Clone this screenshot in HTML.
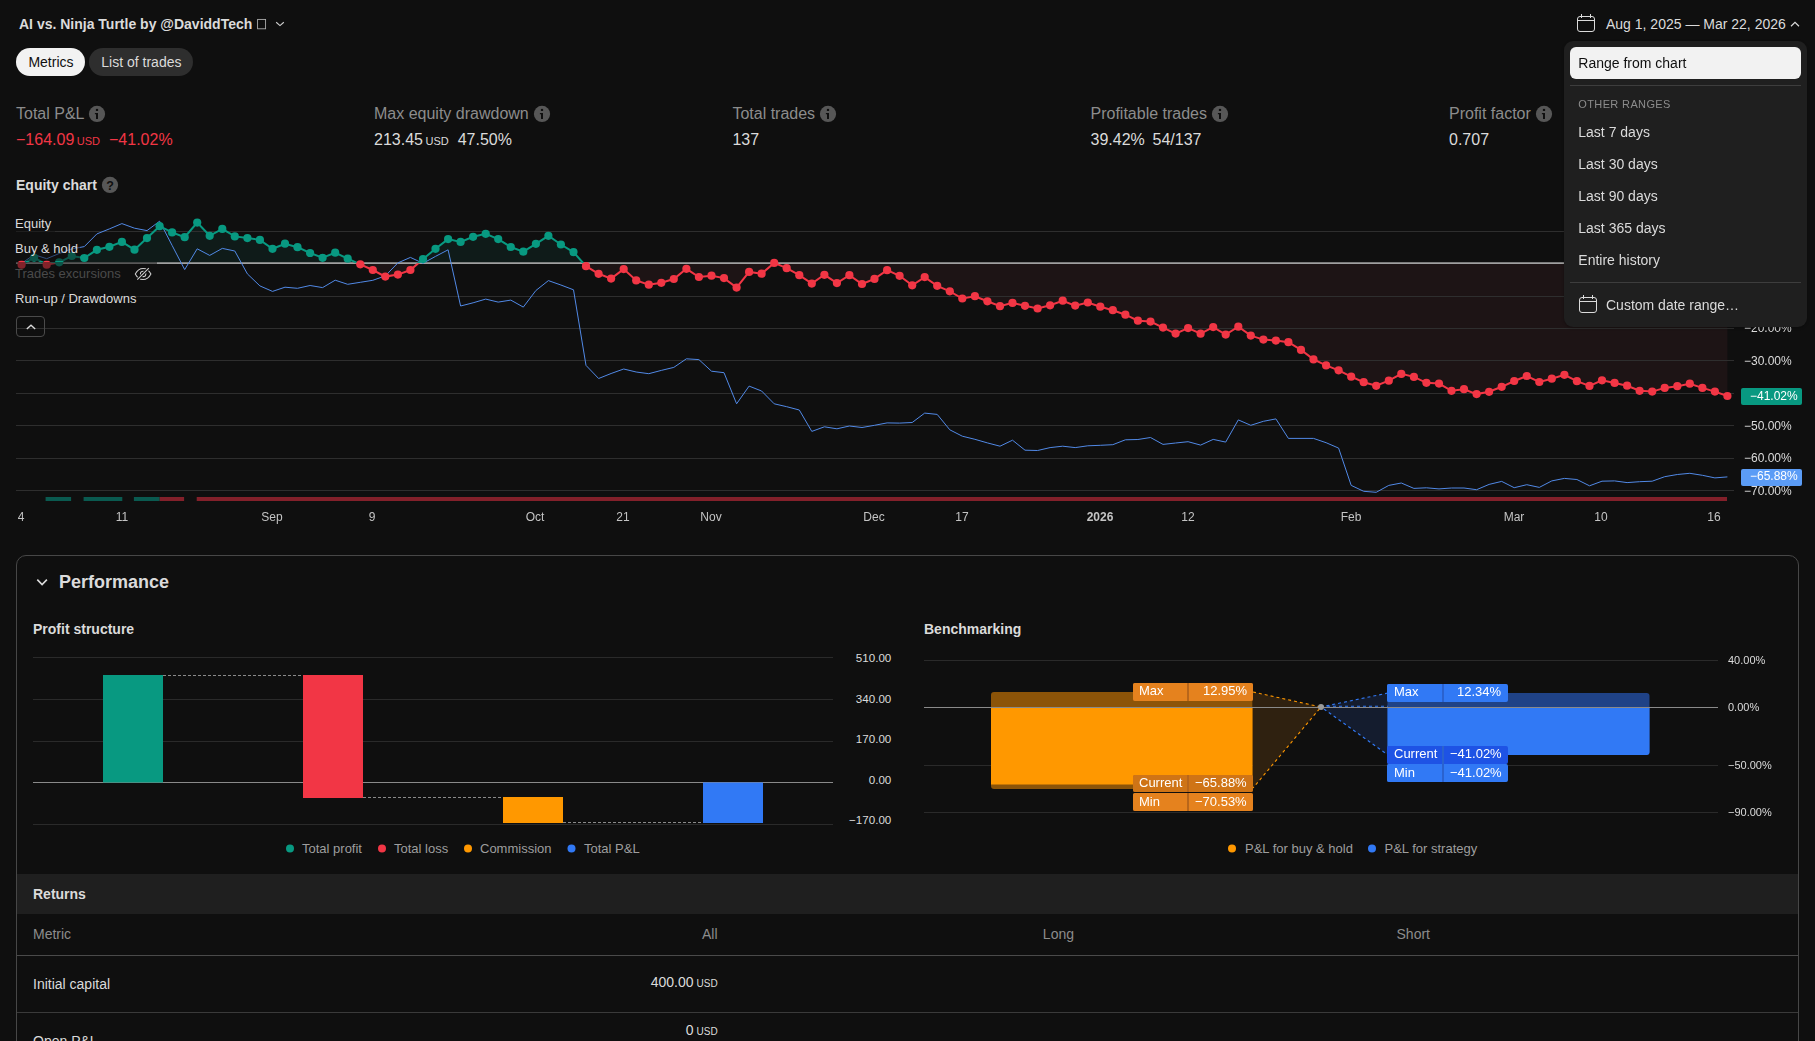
<!DOCTYPE html>
<html><head><meta charset="utf-8"><title>Strategy report</title>
<style>
html,body{margin:0;padding:0;background:#0f0f0f;}
body{width:1815px;height:1041px;overflow:hidden;position:relative;font-family:"Liberation Sans",sans-serif;}
.a{position:absolute;}
.t{position:absolute;white-space:nowrap;}
.u{font-size:11px;margin-left:2.5px;}
.u2{font-size:10px;margin-left:3px;}
</style></head><body>
<div class="t" style="left:19px;top:14.00px;font-size:14px;line-height:20px;color:#dbdbdb;font-weight:700;">AI vs. Ninja Turtle by @DaviddTech</div>
<svg class="a" style="left:255px;top:17px" width="14" height="14" viewBox="255 17 14 14"><rect x="257.6" y="19.4" width="8" height="9.4" fill="none" stroke="#b4b4b4" stroke-width="0.850"/></svg>
<svg class="a" style="left:274px;top:19px" width="12" height="10" viewBox="0 0 12 10"><path d="M2.2 3.3l3.8 3.3 3.8-3.3" fill="none" stroke="#d0d0d0" stroke-width="1.150"/></svg>
<div class="a" style="left:16px;top:48px;width:69px;height:28px;border-radius:14px;background:#f2f2f2"></div>
<div class="t" style="left:28.4px;top:52.00px;font-size:14px;line-height:20px;color:#0f0f0f;font-weight:400;">Metrics</div>
<div class="a" style="left:89.3px;top:48px;width:103.5px;height:28px;border-radius:14px;background:#2e2e2e"></div>
<div class="t" style="left:101.3px;top:52.00px;font-size:14px;line-height:20px;color:#dbdbdb;font-weight:400;">List of trades</div>
<svg class="a" style="left:1576px;top:13px" width="20" height="20" viewBox="0 0 20 20" fill="none" stroke="#dbdbdb" stroke-width="1"><rect x="1.5" y="3.5" width="17" height="15" rx="2.5"/><path d="M1.5 7.5h17M5.5 1v4M14.5 1v4"/></svg>
<div class="t" style="left:1606px;top:14.00px;font-size:14px;line-height:20px;color:#dbdbdb;font-weight:400;">Aug 1, 2025 — Mar 22, 2026</div>
<svg class="a" style="left:1789px;top:19px" width="12" height="10" viewBox="0 0 12 10"><path d="M2 7.2l4-3.8 4 3.8" fill="none" stroke="#dbdbdb" stroke-width="1.2"/></svg>
<div class="t" style="left:16px;top:102.50px;font-size:16px;line-height:22px;color:#8c8c8c;font-weight:400;">Total P&amp;L</div>
<svg class="a" style="left:88px;top:105px" width="18" height="18" viewBox="-9 -9 18 18"><circle cx="0" cy="-0.1" r="8.1" fill="#575757"/><rect x="-1.1" y="-5.1" width="2.2" height="2.1" fill="#0f0f0f"/><path d="M-2.1 -0.9H1V5H-1V0.3H-2.1Z" fill="#0f0f0f"/></svg>
<div class="t" style="left:374px;top:102.50px;font-size:16px;line-height:22px;color:#8c8c8c;font-weight:400;">Max equity drawdown</div>
<svg class="a" style="left:533px;top:105px" width="18" height="18" viewBox="-9 -9 18 18"><circle cx="0" cy="-0.1" r="8.1" fill="#575757"/><rect x="-1.1" y="-5.1" width="2.2" height="2.1" fill="#0f0f0f"/><path d="M-2.1 -0.9H1V5H-1V0.3H-2.1Z" fill="#0f0f0f"/></svg>
<div class="t" style="left:732.4px;top:102.50px;font-size:16px;line-height:22px;color:#8c8c8c;font-weight:400;">Total trades</div>
<svg class="a" style="left:819px;top:105px" width="18" height="18" viewBox="-9 -9 18 18"><circle cx="0" cy="-0.1" r="8.1" fill="#575757"/><rect x="-1.1" y="-5.1" width="2.2" height="2.1" fill="#0f0f0f"/><path d="M-2.1 -0.9H1V5H-1V0.3H-2.1Z" fill="#0f0f0f"/></svg>
<div class="t" style="left:1090.5px;top:102.50px;font-size:16px;line-height:22px;color:#8c8c8c;font-weight:400;">Profitable trades</div>
<svg class="a" style="left:1211px;top:105px" width="18" height="18" viewBox="-9 -9 18 18"><circle cx="0" cy="-0.1" r="8.1" fill="#575757"/><rect x="-1.1" y="-5.1" width="2.2" height="2.1" fill="#0f0f0f"/><path d="M-2.1 -0.9H1V5H-1V0.3H-2.1Z" fill="#0f0f0f"/></svg>
<div class="t" style="left:1449px;top:102.50px;font-size:16px;line-height:22px;color:#8c8c8c;font-weight:400;">Profit factor</div>
<svg class="a" style="left:1535px;top:105px" width="18" height="18" viewBox="-9 -9 18 18"><circle cx="0" cy="-0.1" r="8.1" fill="#575757"/><rect x="-1.1" y="-5.1" width="2.2" height="2.1" fill="#0f0f0f"/><path d="M-2.1 -0.9H1V5H-1V0.3H-2.1Z" fill="#0f0f0f"/></svg>
<div class="t" style="left:16px;top:128.50px;font-size:16px;line-height:22px;color:#f23645;font-weight:400;">−164.09<span class="u">USD</span><span style="margin-left:9px">−41.02%</span></div>
<div class="t" style="left:374px;top:128.50px;font-size:16px;line-height:22px;color:#dbdbdb;font-weight:400;">213.45<span class="u">USD</span><span style="margin-left:9px">47.50%</span></div>
<div class="t" style="left:732.4px;top:128.50px;font-size:16px;line-height:22px;color:#dbdbdb;font-weight:400;">137</div>
<div class="t" style="left:1090.5px;top:128.50px;font-size:16px;line-height:22px;color:#dbdbdb;font-weight:400;">39.42%<span style="margin-left:7.8px">54/137</span></div>
<div class="t" style="left:1449px;top:128.50px;font-size:16px;line-height:22px;color:#dbdbdb;font-weight:400;">0.707</div>
<div class="t" style="left:16px;top:175.00px;font-size:14px;line-height:20px;color:#dbdbdb;font-weight:700;">Equity chart</div>
<svg class="a" style="left:101px;top:175.5px" width="18" height="18" viewBox="-9 -9 18 18"><circle cx="0" cy="-0.1" r="8.1" fill="#575757"/><text x="0.1" y="4.9" text-anchor="middle" font-family="Liberation Sans, sans-serif" font-size="12.5" font-weight="700" fill="#0f0f0f">?</text></svg>
<svg class="a" style="left:0;top:0" width="1815" height="540" viewBox="0 0 1815 540"><defs><clipPath id="up"><rect x="0" y="0" width="1815" height="263.3"/></clipPath><clipPath id="dn"><rect x="0" y="263.3" width="1815" height="300"/></clipPath></defs><path d="M21.6,263.3 L21.6,264.7 L34.1,257.6 L46.7,264.7 L59.2,262.3 L71.8,256.0 L84.3,258.0 L96.9,249.8 L109.4,246.8 L121.9,241.9 L134.5,249.7 L147.0,238.1 L159.6,226.2 L172.1,232.4 L184.7,237.2 L197.2,222.6 L209.7,235.8 L222.3,228.9 L234.8,236.4 L247.4,238.1 L259.9,239.9 L272.5,248.8 L285.0,243.7 L297.5,247.2 L310.1,253.0 L322.6,257.8 L335.2,252.7 L347.7,258.7 L360.3,264.3 L372.8,270.0 L385.3,276.6 L397.9,274.6 L410.4,270.0 L423.0,259.1 L435.5,248.8 L448.1,239.1 L460.6,241.9 L473.1,236.8 L485.7,233.8 L498.2,239.1 L510.8,247.0 L523.3,251.7 L535.9,243.8 L548.4,235.8 L560.9,244.5 L573.5,252.1 L586.0,266.2 L598.6,273.8 L611.1,278.6 L623.7,269.1 L636.2,280.4 L648.8,284.7 L661.3,282.8 L673.8,279.0 L686.4,268.8 L698.9,277.0 L711.5,275.7 L724.0,278.1 L736.6,287.6 L749.1,271.9 L761.6,273.7 L774.2,262.9 L786.7,268.2 L799.3,275.2 L811.8,283.6 L824.4,274.8 L836.9,283.1 L849.4,275.2 L862.0,284.0 L874.5,278.9 L887.1,270.2 L899.6,275.8 L912.2,285.3 L924.7,277.1 L937.2,285.8 L949.8,291.3 L962.3,298.5 L974.9,296.2 L987.4,301.3 L1000.0,306.2 L1012.5,302.9 L1025.0,305.8 L1037.6,308.5 L1050.1,305.3 L1062.7,300.7 L1075.2,305.6 L1087.8,302.5 L1100.3,306.7 L1112.8,310.2 L1125.4,314.7 L1137.9,320.7 L1150.5,321.6 L1163.0,327.6 L1175.6,333.6 L1188.1,328.1 L1200.6,333.7 L1213.2,327.1 L1225.7,334.6 L1238.3,326.7 L1250.8,335.6 L1263.4,339.6 L1275.9,340.6 L1288.4,342.2 L1301.0,349.9 L1313.5,359.4 L1326.1,365.4 L1338.6,370.3 L1351.2,376.7 L1363.7,382.2 L1376.2,385.8 L1388.8,380.7 L1401.3,373.9 L1413.9,376.9 L1426.4,382.8 L1439.0,383.6 L1451.5,390.8 L1464.0,389.2 L1476.6,394.1 L1489.1,391.8 L1501.7,386.8 L1514.2,381.0 L1526.8,376.0 L1539.3,382.0 L1551.8,378.7 L1564.4,374.8 L1576.9,381.2 L1589.5,385.9 L1602.0,380.3 L1614.6,382.9 L1627.1,385.7 L1639.6,390.8 L1652.2,391.6 L1664.7,387.9 L1677.3,386.2 L1689.8,383.7 L1702.4,387.9 L1714.9,391.6 L1727.4,396.0 L1727.4,263.3 Z" fill="#0f1b19" clip-path="url(#up)"/><path d="M21.6,263.3 L21.6,264.7 L34.1,257.6 L46.7,264.7 L59.2,262.3 L71.8,256.0 L84.3,258.0 L96.9,249.8 L109.4,246.8 L121.9,241.9 L134.5,249.7 L147.0,238.1 L159.6,226.2 L172.1,232.4 L184.7,237.2 L197.2,222.6 L209.7,235.8 L222.3,228.9 L234.8,236.4 L247.4,238.1 L259.9,239.9 L272.5,248.8 L285.0,243.7 L297.5,247.2 L310.1,253.0 L322.6,257.8 L335.2,252.7 L347.7,258.7 L360.3,264.3 L372.8,270.0 L385.3,276.6 L397.9,274.6 L410.4,270.0 L423.0,259.1 L435.5,248.8 L448.1,239.1 L460.6,241.9 L473.1,236.8 L485.7,233.8 L498.2,239.1 L510.8,247.0 L523.3,251.7 L535.9,243.8 L548.4,235.8 L560.9,244.5 L573.5,252.1 L586.0,266.2 L598.6,273.8 L611.1,278.6 L623.7,269.1 L636.2,280.4 L648.8,284.7 L661.3,282.8 L673.8,279.0 L686.4,268.8 L698.9,277.0 L711.5,275.7 L724.0,278.1 L736.6,287.6 L749.1,271.9 L761.6,273.7 L774.2,262.9 L786.7,268.2 L799.3,275.2 L811.8,283.6 L824.4,274.8 L836.9,283.1 L849.4,275.2 L862.0,284.0 L874.5,278.9 L887.1,270.2 L899.6,275.8 L912.2,285.3 L924.7,277.1 L937.2,285.8 L949.8,291.3 L962.3,298.5 L974.9,296.2 L987.4,301.3 L1000.0,306.2 L1012.5,302.9 L1025.0,305.8 L1037.6,308.5 L1050.1,305.3 L1062.7,300.7 L1075.2,305.6 L1087.8,302.5 L1100.3,306.7 L1112.8,310.2 L1125.4,314.7 L1137.9,320.7 L1150.5,321.6 L1163.0,327.6 L1175.6,333.6 L1188.1,328.1 L1200.6,333.7 L1213.2,327.1 L1225.7,334.6 L1238.3,326.7 L1250.8,335.6 L1263.4,339.6 L1275.9,340.6 L1288.4,342.2 L1301.0,349.9 L1313.5,359.4 L1326.1,365.4 L1338.6,370.3 L1351.2,376.7 L1363.7,382.2 L1376.2,385.8 L1388.8,380.7 L1401.3,373.9 L1413.9,376.9 L1426.4,382.8 L1439.0,383.6 L1451.5,390.8 L1464.0,389.2 L1476.6,394.1 L1489.1,391.8 L1501.7,386.8 L1514.2,381.0 L1526.8,376.0 L1539.3,382.0 L1551.8,378.7 L1564.4,374.8 L1576.9,381.2 L1589.5,385.9 L1602.0,380.3 L1614.6,382.9 L1627.1,385.7 L1639.6,390.8 L1652.2,391.6 L1664.7,387.9 L1677.3,386.2 L1689.8,383.7 L1702.4,387.9 L1714.9,391.6 L1727.4,396.0 L1727.4,263.3 Z" fill="#1d1415" clip-path="url(#dn)"/><path d="M16 231.5H1734" stroke="#2e2e2e" stroke-width="1"/><path d="M16 296.5H1734" stroke="#2e2e2e" stroke-width="1"/><path d="M16 328.5H1734" stroke="#2e2e2e" stroke-width="1"/><path d="M16 360.5H1734" stroke="#2e2e2e" stroke-width="1"/><path d="M16 393.5H1734" stroke="#2e2e2e" stroke-width="1"/><path d="M16 425.5H1734" stroke="#2e2e2e" stroke-width="1"/><path d="M16 458.5H1734" stroke="#2e2e2e" stroke-width="1"/><path d="M16 490.5H1734" stroke="#2e2e2e" stroke-width="1"/><path d="M16 263.2H1734" stroke="#a0a0a0" stroke-width="1.7"/><polyline points="21.6,263.3 34.1,254.7 46.7,258.7 59.2,253.5 71.8,248.9 84.3,246.6 96.9,233.9 109.4,228.9 121.9,223.6 134.5,228.2 147.0,230.6 159.6,221.2 172.1,245.4 184.7,269.6 197.2,248.8 209.7,255.4 222.3,248.4 234.8,251.0 247.4,273.9 259.9,285.9 272.5,291.4 285.0,287.2 297.5,288.3 310.1,285.5 322.6,287.6 335.2,280.2 347.7,284.3 360.3,282.3 372.8,280.3 385.3,275.9 397.9,262.9 410.4,257.4 423.0,263.3 435.5,256.4 448.1,249.8 460.6,306.0 473.1,302.8 485.7,299.1 498.2,302.1 510.8,300.1 523.3,307.1 535.9,290.5 548.4,280.6 560.9,285.0 573.5,289.8 586.0,365.4 598.6,378.5 611.1,373.5 623.7,369.0 636.2,372.0 648.8,373.7 661.3,370.4 673.8,367.4 686.4,358.8 698.9,359.6 711.5,371.2 724.0,372.7 736.6,403.8 749.1,386.1 761.6,391.0 774.2,403.8 786.7,406.7 799.3,410.0 811.8,431.4 824.4,426.8 836.9,428.8 849.4,426.0 862.0,427.5 874.5,425.3 887.1,422.9 899.6,423.1 912.2,422.5 924.7,413.1 937.2,414.4 949.8,429.8 962.3,436.2 974.9,439.3 987.4,442.9 1000.0,446.2 1012.5,440.2 1025.0,450.2 1037.6,450.5 1050.1,447.6 1062.7,446.2 1075.2,447.6 1087.8,445.8 1100.3,445.3 1112.8,444.7 1125.4,439.8 1137.9,439.5 1150.5,437.5 1163.0,444.4 1175.6,443.0 1188.1,441.7 1200.6,445.1 1213.2,439.4 1225.7,442.1 1238.3,419.9 1250.8,425.3 1263.4,421.3 1275.9,418.9 1288.4,438.4 1301.0,438.4 1313.5,438.4 1326.1,442.7 1338.6,448.1 1351.2,485.4 1363.7,491.3 1376.2,492.3 1388.8,485.4 1401.3,483.0 1413.9,488.4 1426.4,487.8 1439.0,488.9 1451.5,488.0 1464.0,488.0 1476.6,489.7 1489.1,484.4 1501.7,481.4 1514.2,487.7 1526.8,484.7 1539.3,487.4 1551.8,480.9 1564.4,478.4 1576.9,479.5 1589.5,485.8 1602.0,481.2 1614.6,480.9 1627.1,482.6 1639.6,481.7 1652.2,481.2 1664.7,476.7 1677.3,474.5 1689.8,473.3 1702.4,475.3 1714.9,477.9 1727.4,476.9" fill="none" stroke="#5189e6" stroke-width="1" stroke-linejoin="round"/><polyline points="21.6,264.7 34.1,257.6 46.7,264.7 59.2,262.3 71.8,256.0 84.3,258.0 96.9,249.8 109.4,246.8 121.9,241.9 134.5,249.7 147.0,238.1 159.6,226.2 172.1,232.4 184.7,237.2 197.2,222.6 209.7,235.8 222.3,228.9 234.8,236.4 247.4,238.1 259.9,239.9 272.5,248.8 285.0,243.7 297.5,247.2 310.1,253.0 322.6,257.8 335.2,252.7 347.7,258.7 360.3,264.3 372.8,270.0 385.3,276.6 397.9,274.6 410.4,270.0 423.0,259.1 435.5,248.8 448.1,239.1 460.6,241.9 473.1,236.8 485.7,233.8 498.2,239.1 510.8,247.0 523.3,251.7 535.9,243.8 548.4,235.8 560.9,244.5 573.5,252.1 586.0,266.2 598.6,273.8 611.1,278.6 623.7,269.1 636.2,280.4 648.8,284.7 661.3,282.8 673.8,279.0 686.4,268.8 698.9,277.0 711.5,275.7 724.0,278.1 736.6,287.6 749.1,271.9 761.6,273.7 774.2,262.9 786.7,268.2 799.3,275.2 811.8,283.6 824.4,274.8 836.9,283.1 849.4,275.2 862.0,284.0 874.5,278.9 887.1,270.2 899.6,275.8 912.2,285.3 924.7,277.1 937.2,285.8 949.8,291.3 962.3,298.5 974.9,296.2 987.4,301.3 1000.0,306.2 1012.5,302.9 1025.0,305.8 1037.6,308.5 1050.1,305.3 1062.7,300.7 1075.2,305.6 1087.8,302.5 1100.3,306.7 1112.8,310.2 1125.4,314.7 1137.9,320.7 1150.5,321.6 1163.0,327.6 1175.6,333.6 1188.1,328.1 1200.6,333.7 1213.2,327.1 1225.7,334.6 1238.3,326.7 1250.8,335.6 1263.4,339.6 1275.9,340.6 1288.4,342.2 1301.0,349.9 1313.5,359.4 1326.1,365.4 1338.6,370.3 1351.2,376.7 1363.7,382.2 1376.2,385.8 1388.8,380.7 1401.3,373.9 1413.9,376.9 1426.4,382.8 1439.0,383.6 1451.5,390.8 1464.0,389.2 1476.6,394.1 1489.1,391.8 1501.7,386.8 1514.2,381.0 1526.8,376.0 1539.3,382.0 1551.8,378.7 1564.4,374.8 1576.9,381.2 1589.5,385.9 1602.0,380.3 1614.6,382.9 1627.1,385.7 1639.6,390.8 1652.2,391.6 1664.7,387.9 1677.3,386.2 1689.8,383.7 1702.4,387.9 1714.9,391.6 1727.4,396.0" fill="none" stroke="#089981" stroke-width="2" clip-path="url(#up)"/><polyline points="21.6,264.7 34.1,257.6 46.7,264.7 59.2,262.3 71.8,256.0 84.3,258.0 96.9,249.8 109.4,246.8 121.9,241.9 134.5,249.7 147.0,238.1 159.6,226.2 172.1,232.4 184.7,237.2 197.2,222.6 209.7,235.8 222.3,228.9 234.8,236.4 247.4,238.1 259.9,239.9 272.5,248.8 285.0,243.7 297.5,247.2 310.1,253.0 322.6,257.8 335.2,252.7 347.7,258.7 360.3,264.3 372.8,270.0 385.3,276.6 397.9,274.6 410.4,270.0 423.0,259.1 435.5,248.8 448.1,239.1 460.6,241.9 473.1,236.8 485.7,233.8 498.2,239.1 510.8,247.0 523.3,251.7 535.9,243.8 548.4,235.8 560.9,244.5 573.5,252.1 586.0,266.2 598.6,273.8 611.1,278.6 623.7,269.1 636.2,280.4 648.8,284.7 661.3,282.8 673.8,279.0 686.4,268.8 698.9,277.0 711.5,275.7 724.0,278.1 736.6,287.6 749.1,271.9 761.6,273.7 774.2,262.9 786.7,268.2 799.3,275.2 811.8,283.6 824.4,274.8 836.9,283.1 849.4,275.2 862.0,284.0 874.5,278.9 887.1,270.2 899.6,275.8 912.2,285.3 924.7,277.1 937.2,285.8 949.8,291.3 962.3,298.5 974.9,296.2 987.4,301.3 1000.0,306.2 1012.5,302.9 1025.0,305.8 1037.6,308.5 1050.1,305.3 1062.7,300.7 1075.2,305.6 1087.8,302.5 1100.3,306.7 1112.8,310.2 1125.4,314.7 1137.9,320.7 1150.5,321.6 1163.0,327.6 1175.6,333.6 1188.1,328.1 1200.6,333.7 1213.2,327.1 1225.7,334.6 1238.3,326.7 1250.8,335.6 1263.4,339.6 1275.9,340.6 1288.4,342.2 1301.0,349.9 1313.5,359.4 1326.1,365.4 1338.6,370.3 1351.2,376.7 1363.7,382.2 1376.2,385.8 1388.8,380.7 1401.3,373.9 1413.9,376.9 1426.4,382.8 1439.0,383.6 1451.5,390.8 1464.0,389.2 1476.6,394.1 1489.1,391.8 1501.7,386.8 1514.2,381.0 1526.8,376.0 1539.3,382.0 1551.8,378.7 1564.4,374.8 1576.9,381.2 1589.5,385.9 1602.0,380.3 1614.6,382.9 1627.1,385.7 1639.6,390.8 1652.2,391.6 1664.7,387.9 1677.3,386.2 1689.8,383.7 1702.4,387.9 1714.9,391.6 1727.4,396.0" fill="none" stroke="#f23645" stroke-width="2" clip-path="url(#dn)"/><circle cx="21.6" cy="264.7" r="4.1" fill="#f23645"/><circle cx="34.1" cy="257.6" r="4.1" fill="#089981"/><circle cx="46.7" cy="264.7" r="4.1" fill="#f23645"/><circle cx="59.2" cy="262.3" r="4.1" fill="#089981"/><circle cx="71.8" cy="256.0" r="4.1" fill="#089981"/><circle cx="84.3" cy="258.0" r="4.1" fill="#089981"/><circle cx="96.9" cy="249.8" r="4.1" fill="#089981"/><circle cx="109.4" cy="246.8" r="4.1" fill="#089981"/><circle cx="121.9" cy="241.9" r="4.1" fill="#089981"/><circle cx="134.5" cy="249.7" r="4.1" fill="#089981"/><circle cx="147.0" cy="238.1" r="4.1" fill="#089981"/><circle cx="159.6" cy="226.2" r="4.1" fill="#089981"/><circle cx="172.1" cy="232.4" r="4.1" fill="#089981"/><circle cx="184.7" cy="237.2" r="4.1" fill="#089981"/><circle cx="197.2" cy="222.6" r="4.1" fill="#089981"/><circle cx="209.7" cy="235.8" r="4.1" fill="#089981"/><circle cx="222.3" cy="228.9" r="4.1" fill="#089981"/><circle cx="234.8" cy="236.4" r="4.1" fill="#089981"/><circle cx="247.4" cy="238.1" r="4.1" fill="#089981"/><circle cx="259.9" cy="239.9" r="4.1" fill="#089981"/><circle cx="272.5" cy="248.8" r="4.1" fill="#089981"/><circle cx="285.0" cy="243.7" r="4.1" fill="#089981"/><circle cx="297.5" cy="247.2" r="4.1" fill="#089981"/><circle cx="310.1" cy="253.0" r="4.1" fill="#089981"/><circle cx="322.6" cy="257.8" r="4.1" fill="#089981"/><circle cx="335.2" cy="252.7" r="4.1" fill="#089981"/><circle cx="347.7" cy="258.7" r="4.1" fill="#089981"/><circle cx="360.3" cy="264.3" r="4.1" fill="#f23645"/><circle cx="372.8" cy="270.0" r="4.1" fill="#f23645"/><circle cx="385.3" cy="276.6" r="4.1" fill="#f23645"/><circle cx="397.9" cy="274.6" r="4.1" fill="#f23645"/><circle cx="410.4" cy="270.0" r="4.1" fill="#f23645"/><circle cx="423.0" cy="259.1" r="4.1" fill="#089981"/><circle cx="435.5" cy="248.8" r="4.1" fill="#089981"/><circle cx="448.1" cy="239.1" r="4.1" fill="#089981"/><circle cx="460.6" cy="241.9" r="4.1" fill="#089981"/><circle cx="473.1" cy="236.8" r="4.1" fill="#089981"/><circle cx="485.7" cy="233.8" r="4.1" fill="#089981"/><circle cx="498.2" cy="239.1" r="4.1" fill="#089981"/><circle cx="510.8" cy="247.0" r="4.1" fill="#089981"/><circle cx="523.3" cy="251.7" r="4.1" fill="#089981"/><circle cx="535.9" cy="243.8" r="4.1" fill="#089981"/><circle cx="548.4" cy="235.8" r="4.1" fill="#089981"/><circle cx="560.9" cy="244.5" r="4.1" fill="#089981"/><circle cx="573.5" cy="252.1" r="4.1" fill="#089981"/><circle cx="586.0" cy="266.2" r="4.1" fill="#f23645"/><circle cx="598.6" cy="273.8" r="4.1" fill="#f23645"/><circle cx="611.1" cy="278.6" r="4.1" fill="#f23645"/><circle cx="623.7" cy="269.1" r="4.1" fill="#f23645"/><circle cx="636.2" cy="280.4" r="4.1" fill="#f23645"/><circle cx="648.8" cy="284.7" r="4.1" fill="#f23645"/><circle cx="661.3" cy="282.8" r="4.1" fill="#f23645"/><circle cx="673.8" cy="279.0" r="4.1" fill="#f23645"/><circle cx="686.4" cy="268.8" r="4.1" fill="#f23645"/><circle cx="698.9" cy="277.0" r="4.1" fill="#f23645"/><circle cx="711.5" cy="275.7" r="4.1" fill="#f23645"/><circle cx="724.0" cy="278.1" r="4.1" fill="#f23645"/><circle cx="736.6" cy="287.6" r="4.1" fill="#f23645"/><circle cx="749.1" cy="271.9" r="4.1" fill="#f23645"/><circle cx="761.6" cy="273.7" r="4.1" fill="#f23645"/><circle cx="774.2" cy="262.9" r="4.1" fill="#f23645"/><circle cx="786.7" cy="268.2" r="4.1" fill="#f23645"/><circle cx="799.3" cy="275.2" r="4.1" fill="#f23645"/><circle cx="811.8" cy="283.6" r="4.1" fill="#f23645"/><circle cx="824.4" cy="274.8" r="4.1" fill="#f23645"/><circle cx="836.9" cy="283.1" r="4.1" fill="#f23645"/><circle cx="849.4" cy="275.2" r="4.1" fill="#f23645"/><circle cx="862.0" cy="284.0" r="4.1" fill="#f23645"/><circle cx="874.5" cy="278.9" r="4.1" fill="#f23645"/><circle cx="887.1" cy="270.2" r="4.1" fill="#f23645"/><circle cx="899.6" cy="275.8" r="4.1" fill="#f23645"/><circle cx="912.2" cy="285.3" r="4.1" fill="#f23645"/><circle cx="924.7" cy="277.1" r="4.1" fill="#f23645"/><circle cx="937.2" cy="285.8" r="4.1" fill="#f23645"/><circle cx="949.8" cy="291.3" r="4.1" fill="#f23645"/><circle cx="962.3" cy="298.5" r="4.1" fill="#f23645"/><circle cx="974.9" cy="296.2" r="4.1" fill="#f23645"/><circle cx="987.4" cy="301.3" r="4.1" fill="#f23645"/><circle cx="1000.0" cy="306.2" r="4.1" fill="#f23645"/><circle cx="1012.5" cy="302.9" r="4.1" fill="#f23645"/><circle cx="1025.0" cy="305.8" r="4.1" fill="#f23645"/><circle cx="1037.6" cy="308.5" r="4.1" fill="#f23645"/><circle cx="1050.1" cy="305.3" r="4.1" fill="#f23645"/><circle cx="1062.7" cy="300.7" r="4.1" fill="#f23645"/><circle cx="1075.2" cy="305.6" r="4.1" fill="#f23645"/><circle cx="1087.8" cy="302.5" r="4.1" fill="#f23645"/><circle cx="1100.3" cy="306.7" r="4.1" fill="#f23645"/><circle cx="1112.8" cy="310.2" r="4.1" fill="#f23645"/><circle cx="1125.4" cy="314.7" r="4.1" fill="#f23645"/><circle cx="1137.9" cy="320.7" r="4.1" fill="#f23645"/><circle cx="1150.5" cy="321.6" r="4.1" fill="#f23645"/><circle cx="1163.0" cy="327.6" r="4.1" fill="#f23645"/><circle cx="1175.6" cy="333.6" r="4.1" fill="#f23645"/><circle cx="1188.1" cy="328.1" r="4.1" fill="#f23645"/><circle cx="1200.6" cy="333.7" r="4.1" fill="#f23645"/><circle cx="1213.2" cy="327.1" r="4.1" fill="#f23645"/><circle cx="1225.7" cy="334.6" r="4.1" fill="#f23645"/><circle cx="1238.3" cy="326.7" r="4.1" fill="#f23645"/><circle cx="1250.8" cy="335.6" r="4.1" fill="#f23645"/><circle cx="1263.4" cy="339.6" r="4.1" fill="#f23645"/><circle cx="1275.9" cy="340.6" r="4.1" fill="#f23645"/><circle cx="1288.4" cy="342.2" r="4.1" fill="#f23645"/><circle cx="1301.0" cy="349.9" r="4.1" fill="#f23645"/><circle cx="1313.5" cy="359.4" r="4.1" fill="#f23645"/><circle cx="1326.1" cy="365.4" r="4.1" fill="#f23645"/><circle cx="1338.6" cy="370.3" r="4.1" fill="#f23645"/><circle cx="1351.2" cy="376.7" r="4.1" fill="#f23645"/><circle cx="1363.7" cy="382.2" r="4.1" fill="#f23645"/><circle cx="1376.2" cy="385.8" r="4.1" fill="#f23645"/><circle cx="1388.8" cy="380.7" r="4.1" fill="#f23645"/><circle cx="1401.3" cy="373.9" r="4.1" fill="#f23645"/><circle cx="1413.9" cy="376.9" r="4.1" fill="#f23645"/><circle cx="1426.4" cy="382.8" r="4.1" fill="#f23645"/><circle cx="1439.0" cy="383.6" r="4.1" fill="#f23645"/><circle cx="1451.5" cy="390.8" r="4.1" fill="#f23645"/><circle cx="1464.0" cy="389.2" r="4.1" fill="#f23645"/><circle cx="1476.6" cy="394.1" r="4.1" fill="#f23645"/><circle cx="1489.1" cy="391.8" r="4.1" fill="#f23645"/><circle cx="1501.7" cy="386.8" r="4.1" fill="#f23645"/><circle cx="1514.2" cy="381.0" r="4.1" fill="#f23645"/><circle cx="1526.8" cy="376.0" r="4.1" fill="#f23645"/><circle cx="1539.3" cy="382.0" r="4.1" fill="#f23645"/><circle cx="1551.8" cy="378.7" r="4.1" fill="#f23645"/><circle cx="1564.4" cy="374.8" r="4.1" fill="#f23645"/><circle cx="1576.9" cy="381.2" r="4.1" fill="#f23645"/><circle cx="1589.5" cy="385.9" r="4.1" fill="#f23645"/><circle cx="1602.0" cy="380.3" r="4.1" fill="#f23645"/><circle cx="1614.6" cy="382.9" r="4.1" fill="#f23645"/><circle cx="1627.1" cy="385.7" r="4.1" fill="#f23645"/><circle cx="1639.6" cy="390.8" r="4.1" fill="#f23645"/><circle cx="1652.2" cy="391.6" r="4.1" fill="#f23645"/><circle cx="1664.7" cy="387.9" r="4.1" fill="#f23645"/><circle cx="1677.3" cy="386.2" r="4.1" fill="#f23645"/><circle cx="1689.8" cy="383.7" r="4.1" fill="#f23645"/><circle cx="1702.4" cy="387.9" r="4.1" fill="#f23645"/><circle cx="1714.9" cy="391.6" r="4.1" fill="#f23645"/><circle cx="1727.4" cy="396.0" r="4.1" fill="#f23645"/><rect x="45.6" y="497" width="25.5" height="4" fill="#0a5a50"/><rect x="83.6" y="497" width="38.7" height="4" fill="#0a5a50"/><rect x="133.9" y="497" width="25.8" height="4" fill="#0a5a50"/><rect x="159.7" y="497" width="24.4" height="4" fill="#83202a"/><rect x="196.7" y="497" width="1530.3" height="4" fill="#83202a"/></svg>
<div class="a" style="left:10px;top:212px;width:45px;height:24px;background:rgba(15,15,15,0.5)"></div>
<div class="a" style="left:10px;top:237px;width:70px;height:24px;background:rgba(15,15,15,0.5)"></div>
<div class="a" style="left:10px;top:262.1px;width:147px;height:24px;background:rgba(15,15,15,0.5)"></div>
<div class="a" style="left:10px;top:287px;width:130px;height:24px;background:rgba(15,15,15,0.5)"></div>
<div class="t" style="left:15px;top:214.50px;font-size:13px;line-height:18px;color:#dbdbdb;font-weight:400;">Equity</div>
<div class="t" style="left:15px;top:239.50px;font-size:13px;line-height:18px;color:#dbdbdb;font-weight:400;">Buy &amp; hold</div>
<div class="t" style="left:15px;top:264.50px;font-size:13px;line-height:18px;color:#4a4a4a;font-weight:400;">Trades excursions</div>
<div class="t" style="left:15px;top:289.50px;font-size:13px;line-height:18px;color:#dbdbdb;font-weight:400;">Run-up / Drawdowns</div>
<svg class="a" style="left:133px;top:265px" width="20" height="18" viewBox="0 0 20 18" fill="none" stroke="#d0d0d0" stroke-width="1.05"><path d="M2.3 8.9C4.2 5.2 6.9 3.4 10.1 3.4s5.9 1.8 7.8 5.5C16 12.6 13.3 14.4 10.1 14.4S4.2 12.6 2.3 8.9z"/><circle cx="10.1" cy="8.9" r="2.7"/><path d="M4.3 14.7L15.8 3.1" stroke="#0f0f0f" stroke-width="3"/><path d="M4.3 14.7L15.8 3.1"/></svg>
<div class="a" style="left:16px;top:316px;width:29px;height:21px;border:1px solid #4a4a4a;border-radius:4px;box-sizing:border-box"></div>
<svg class="a" style="left:24.5px;top:321.5px" width="12" height="10" viewBox="0 0 12 10"><path d="M1.8 7l4.2-3.8L10.2 7" fill="none" stroke="#dbdbdb" stroke-width="1.3"/></svg>
<div class="t" style="left:1744px;top:320.00px;font-size:12px;line-height:17px;color:#dbdbdb;font-weight:400;will-change:transform;">−20.00%</div>
<div class="t" style="left:1744px;top:352.50px;font-size:12px;line-height:17px;color:#dbdbdb;font-weight:400;will-change:transform;">−30.00%</div>
<div class="t" style="left:1744px;top:417.50px;font-size:12px;line-height:17px;color:#dbdbdb;font-weight:400;will-change:transform;">−50.00%</div>
<div class="t" style="left:1744px;top:450.00px;font-size:12px;line-height:17px;color:#dbdbdb;font-weight:400;will-change:transform;">−60.00%</div>
<div class="t" style="left:1744px;top:482.50px;font-size:12px;line-height:17px;color:#dbdbdb;font-weight:400;will-change:transform;">−70.00%</div>
<div class="a" style="left:1741.2px;top:387.8px;width:61.2px;height:17.2px;border-radius:2px;background:#089981"></div>
<div class="t" style="left:1750px;top:388.30px;font-size:12px;line-height:17px;color:#fff;font-weight:400;will-change:transform;">−41.02%</div>
<div class="a" style="left:1741.2px;top:468.7px;width:61.2px;height:17px;border-radius:2px;background:#5b9cf6"></div>
<div class="t" style="left:1750px;top:468.00px;font-size:12px;line-height:17px;color:#fff;font-weight:400;will-change:transform;">−65.88%</div>
<div class="t" style="left:-178.8px;width:400px;text-align:center;top:509.00px;font-size:12px;line-height:17px;color:#c4c4c4;font-weight:400;will-change:transform;">4</div>
<div class="t" style="left:-78.3px;width:400px;text-align:center;top:509.00px;font-size:12px;line-height:17px;color:#c4c4c4;font-weight:400;will-change:transform;">11</div>
<div class="t" style="left:72.19999999999999px;width:400px;text-align:center;top:509.00px;font-size:12px;line-height:17px;color:#c4c4c4;font-weight:400;will-change:transform;">Sep</div>
<div class="t" style="left:172.2px;width:400px;text-align:center;top:509.00px;font-size:12px;line-height:17px;color:#c4c4c4;font-weight:400;will-change:transform;">9</div>
<div class="t" style="left:335.20000000000005px;width:400px;text-align:center;top:509.00px;font-size:12px;line-height:17px;color:#c4c4c4;font-weight:400;will-change:transform;">Oct</div>
<div class="t" style="left:423.20000000000005px;width:400px;text-align:center;top:509.00px;font-size:12px;line-height:17px;color:#c4c4c4;font-weight:400;will-change:transform;">21</div>
<div class="t" style="left:510.70000000000005px;width:400px;text-align:center;top:509.00px;font-size:12px;line-height:17px;color:#c4c4c4;font-weight:400;will-change:transform;">Nov</div>
<div class="t" style="left:674.2px;width:400px;text-align:center;top:509.00px;font-size:12px;line-height:17px;color:#c4c4c4;font-weight:400;will-change:transform;">Dec</div>
<div class="t" style="left:761.9px;width:400px;text-align:center;top:509.00px;font-size:12px;line-height:17px;color:#c4c4c4;font-weight:400;will-change:transform;">17</div>
<div class="t" style="left:899.9000000000001px;width:400px;text-align:center;top:509.00px;font-size:12px;line-height:17px;color:#c4c4c4;font-weight:700;will-change:transform;">2026</div>
<div class="t" style="left:987.9000000000001px;width:400px;text-align:center;top:509.00px;font-size:12px;line-height:17px;color:#c4c4c4;font-weight:400;will-change:transform;">12</div>
<div class="t" style="left:1150.9px;width:400px;text-align:center;top:509.00px;font-size:12px;line-height:17px;color:#c4c4c4;font-weight:400;will-change:transform;">Feb</div>
<div class="t" style="left:1314.4px;width:400px;text-align:center;top:509.00px;font-size:12px;line-height:17px;color:#c4c4c4;font-weight:400;will-change:transform;">Mar</div>
<div class="t" style="left:1401.4px;width:400px;text-align:center;top:509.00px;font-size:12px;line-height:17px;color:#c4c4c4;font-weight:400;will-change:transform;">10</div>
<div class="t" style="left:1514.4px;width:400px;text-align:center;top:509.00px;font-size:12px;line-height:17px;color:#c4c4c4;font-weight:400;will-change:transform;">16</div>
<div class="a" style="left:1564px;top:41px;width:243px;height:285.8px;border-radius:9px;background:#1f1f1f;box-shadow:0 1px 3px rgba(0,0,0,.3)"></div>
<div class="a" style="left:1570px;top:47px;width:231px;height:32px;border-radius:6px;background:#f2f2f2"></div>
<div class="t" style="left:1578.3px;top:53.00px;font-size:14px;line-height:20px;color:#0f0f0f;font-weight:400;">Range from chart</div>
<div class="a" style="left:1570px;top:85px;width:231px;height:1px;background:#3d3d3d"></div>
<div class="t" style="left:1578.3px;top:96.80px;font-size:11px;line-height:15px;color:#8c8c8c;font-weight:400;letter-spacing:0.37px;">OTHER RANGES</div>
<div class="t" style="left:1578.3px;top:122.00px;font-size:14px;line-height:20px;color:#dbdbdb;font-weight:400;">Last 7 days</div>
<div class="t" style="left:1578.3px;top:154.00px;font-size:14px;line-height:20px;color:#dbdbdb;font-weight:400;">Last 30 days</div>
<div class="t" style="left:1578.3px;top:186.00px;font-size:14px;line-height:20px;color:#dbdbdb;font-weight:400;">Last 90 days</div>
<div class="t" style="left:1578.3px;top:218.00px;font-size:14px;line-height:20px;color:#dbdbdb;font-weight:400;">Last 365 days</div>
<div class="t" style="left:1578.3px;top:250.00px;font-size:14px;line-height:20px;color:#dbdbdb;font-weight:400;">Entire history</div>
<div class="a" style="left:1570px;top:281.5px;width:231px;height:1px;background:#3d3d3d"></div>
<svg class="a" style="left:1577.5px;top:294px" width="20" height="20" viewBox="0 0 20 20" fill="none" stroke="#dbdbdb" stroke-width="1"><rect x="1.5" y="3.5" width="17" height="15" rx="2.5"/><path d="M1.5 7.5h17M5.5 1v4M14.5 1v4"/></svg>
<div class="t" style="left:1606px;top:295.00px;font-size:14px;line-height:20px;color:#dbdbdb;font-weight:400;">Custom date range…</div>
<div class="a" style="left:16px;top:555px;width:1783px;height:520px;border:1px solid #474747;border-radius:10px;box-sizing:border-box"></div>
<svg class="a" style="left:35px;top:576px" width="14" height="12" viewBox="35 576 14 12"><path d="M37.3 579.6L42.1 584.5L46.9 579.6" fill="none" stroke="#dbdbdb" stroke-width="1.6"/></svg>
<div class="t" style="left:59px;top:569.50px;font-size:18px;line-height:25px;color:#dbdbdb;font-weight:700;">Performance</div>
<div class="t" style="left:33px;top:619.00px;font-size:14px;line-height:20px;color:#dbdbdb;font-weight:700;">Profit structure</div>
<div class="t" style="left:924px;top:619.00px;font-size:14px;line-height:20px;color:#dbdbdb;font-weight:700;">Benchmarking</div>
<svg class="a" style="left:0;top:540px" width="1815" height="340" viewBox="0 540 1815 340"><path d="M33 657.5H833" stroke="#2a2a2a"/><path d="M33 699.5H833" stroke="#2a2a2a"/><path d="M33 741.5H833" stroke="#2a2a2a"/><path d="M33 824.5H833" stroke="#2a2a2a"/><path d="M33 782.5H833" stroke="#8a8a8a"/><rect x="103" y="675" width="60" height="107.5" fill="#089981"/><rect x="303" y="675" width="60" height="123" fill="#f23645"/><rect x="503" y="797" width="60" height="26" fill="#ff9800"/><rect x="703" y="782.5" width="60" height="40.5" fill="#3179f5"/><path d="M163 675.5H303" stroke="#8a8a8a" stroke-dasharray="3 2" stroke-width="1"/><path d="M363 797.5H503" stroke="#8a8a8a" stroke-dasharray="3 2" stroke-width="1"/><path d="M563 822.5H703" stroke="#8a8a8a" stroke-dasharray="3 2" stroke-width="1"/><circle cx="290" cy="848.5" r="4" fill="#089981"/><circle cx="382" cy="848.5" r="4" fill="#f23645"/><circle cx="468" cy="848.5" r="4" fill="#ff9800"/><circle cx="571.5" cy="848.5" r="4" fill="#3179f5"/><path d="M924 660.5H1718" stroke="#2a2a2a"/><path d="M924 765.5H1718" stroke="#2a2a2a"/><path d="M924 812.5H1718" stroke="#2a2a2a"/><path d="M1253 692L1321 707L1253 788Z" fill="#2f2110"/><path d="M1388 693L1321 707L1388 755Z" fill="#141c2e"/><rect x="991" y="692" width="261.5" height="97" rx="3" fill="#8c5408"/><rect x="991" y="707" width="261.5" height="77.5" fill="#ff9800"/><rect x="1387.5" y="693" width="262" height="62" rx="3" fill="#1f4287"/><path d="M1387.5 707H1649.5V752a3 3 0 0 1-3 3H1390.5a3 3 0 0 1-3-3Z" fill="#3179f5"/><path d="M924 707.5H1718" stroke="#8a8a8a"/><path d="M1253 692L1321 707L1253 788" fill="none" stroke="#ff9800" stroke-dasharray="3 3" stroke-width="1.1"/><path d="M1388 693L1321 707L1388 755M1321 706.3H1388" fill="none" stroke="#3179f5" stroke-dasharray="3 3" stroke-width="1.1"/><circle cx="1321" cy="707" r="3" fill="#9a9a9a"/><circle cx="1232" cy="848.5" r="4" fill="#ff9800"/><circle cx="1372" cy="848.5" r="4" fill="#3179f5"/></svg>
<div class="t" style="right:923.7px;top:649.60px;font-size:11.6px;line-height:16px;color:#dbdbdb;font-weight:400;">510.00</div>
<div class="t" style="right:923.7px;top:690.60px;font-size:11.6px;line-height:16px;color:#dbdbdb;font-weight:400;">340.00</div>
<div class="t" style="right:923.7px;top:731.10px;font-size:11.6px;line-height:16px;color:#dbdbdb;font-weight:400;">170.00</div>
<div class="t" style="right:923.7px;top:771.60px;font-size:11.6px;line-height:16px;color:#dbdbdb;font-weight:400;">0.00</div>
<div class="t" style="right:923.7px;top:811.60px;font-size:11.6px;line-height:16px;color:#dbdbdb;font-weight:400;">−170.00</div>
<div class="t" style="left:1728px;top:652.50px;font-size:11px;line-height:15px;color:#dbdbdb;font-weight:400;will-change:transform;">40.00%</div>
<div class="t" style="left:1728px;top:699.50px;font-size:11px;line-height:15px;color:#dbdbdb;font-weight:400;will-change:transform;">0.00%</div>
<div class="t" style="left:1728px;top:757.50px;font-size:11px;line-height:15px;color:#dbdbdb;font-weight:400;will-change:transform;">−50.00%</div>
<div class="t" style="left:1728px;top:804.50px;font-size:11px;line-height:15px;color:#dbdbdb;font-weight:400;will-change:transform;">−90.00%</div>
<div class="t" style="left:302px;top:839.50px;font-size:13px;line-height:18px;color:#9e9e9e;font-weight:400;">Total profit</div>
<div class="t" style="left:394px;top:839.50px;font-size:13px;line-height:18px;color:#9e9e9e;font-weight:400;">Total loss</div>
<div class="t" style="left:480px;top:839.50px;font-size:13px;line-height:18px;color:#9e9e9e;font-weight:400;">Commission</div>
<div class="t" style="left:584px;top:839.50px;font-size:13px;line-height:18px;color:#9e9e9e;font-weight:400;">Total P&amp;L</div>
<div class="t" style="left:1245px;top:839.50px;font-size:13px;line-height:18px;color:#9e9e9e;font-weight:400;">P&amp;L for buy &amp; hold</div>
<div class="t" style="left:1384.5px;top:839.50px;font-size:13px;line-height:18px;color:#9e9e9e;font-weight:400;">P&amp;L for strategy</div>
<div class="a" style="left:1132.5px;top:683px;width:120.5px;height:18px;background:#b8661a;border-radius:2px"></div>
<div class="a" style="left:1132.5px;top:683px;width:54.5px;height:18px;background:#e5821e;border-radius:2px 0 0 2px"></div>
<div class="a" style="left:1189px;top:683px;width:64.0px;height:18px;background:#e5821e;border-radius:0 2px 2px 0"></div>
<div class="t" style="left:1138.8px;top:682.20px;font-size:13px;line-height:18px;color:#fff;font-weight:400;will-change:transform;">Max</div>
<div class="t" style="right:568.3px;top:682.20px;font-size:13px;line-height:18px;color:#fff;font-weight:400;will-change:transform;">12.95%</div>
<div class="a" style="left:1132.5px;top:775.2px;width:120.5px;height:16.8px;background:#b8661a;border-radius:2px"></div>
<div class="a" style="left:1132.5px;top:775.2px;width:54.5px;height:16.8px;background:#cf7416;border-radius:2px 0 0 2px"></div>
<div class="a" style="left:1189px;top:775.2px;width:64.0px;height:16.8px;background:#cf7416;border-radius:0 2px 2px 0"></div>
<div class="t" style="left:1138.8px;top:774.20px;font-size:13px;line-height:18px;color:#fff;font-weight:400;will-change:transform;">Current</div>
<div class="t" style="right:568.3px;top:774.20px;font-size:13px;line-height:18px;color:#fff;font-weight:400;will-change:transform;">−65.88%</div>
<div class="a" style="left:1132.5px;top:793px;width:120.5px;height:18px;background:#b8661a;border-radius:2px"></div>
<div class="a" style="left:1132.5px;top:793px;width:54.5px;height:18px;background:#e5821e;border-radius:2px 0 0 2px"></div>
<div class="a" style="left:1189px;top:793px;width:64.0px;height:18px;background:#e5821e;border-radius:0 2px 2px 0"></div>
<div class="t" style="left:1138.8px;top:792.60px;font-size:13px;line-height:18px;color:#fff;font-weight:400;will-change:transform;">Min</div>
<div class="t" style="right:568.3px;top:792.60px;font-size:13px;line-height:18px;color:#fff;font-weight:400;will-change:transform;">−70.53%</div>
<div class="a" style="left:1387.2px;top:684px;width:120.3px;height:18px;background:#2a62cf;border-radius:2px"></div>
<div class="a" style="left:1387.2px;top:684px;width:54.799999999999955px;height:18px;background:#3179f5;border-radius:2px 0 0 2px"></div>
<div class="a" style="left:1444px;top:684px;width:63.5px;height:18px;background:#3179f5;border-radius:0 2px 2px 0"></div>
<div class="t" style="left:1393.5px;top:683.10px;font-size:13px;line-height:18px;color:#fff;font-weight:400;will-change:transform;">Max</div>
<div class="t" style="right:313.79999999999995px;top:683.10px;font-size:13px;line-height:18px;color:#fff;font-weight:400;will-change:transform;">12.34%</div>
<div class="a" style="left:1387.2px;top:746.3px;width:120.3px;height:17.5px;background:#2a62cf;border-radius:2px"></div>
<div class="a" style="left:1387.2px;top:746.3px;width:54.799999999999955px;height:17.5px;background:#1e53e5;border-radius:2px 0 0 2px"></div>
<div class="a" style="left:1444px;top:746.3px;width:63.5px;height:17.5px;background:#1e53e5;border-radius:0 2px 2px 0"></div>
<div class="t" style="left:1393.5px;top:745.00px;font-size:13px;line-height:18px;color:#fff;font-weight:400;will-change:transform;">Current</div>
<div class="t" style="right:313.79999999999995px;top:745.00px;font-size:13px;line-height:18px;color:#fff;font-weight:400;will-change:transform;">−41.02%</div>
<div class="a" style="left:1387.2px;top:763.8px;width:120.3px;height:18.4px;background:#2a62cf;border-radius:2px"></div>
<div class="a" style="left:1387.2px;top:763.8px;width:54.799999999999955px;height:18.4px;background:#3179f5;border-radius:2px 0 0 2px"></div>
<div class="a" style="left:1444px;top:763.8px;width:63.5px;height:18.4px;background:#3179f5;border-radius:0 2px 2px 0"></div>
<div class="t" style="left:1393.5px;top:764.00px;font-size:13px;line-height:18px;color:#fff;font-weight:400;will-change:transform;">Min</div>
<div class="t" style="right:313.79999999999995px;top:764.00px;font-size:13px;line-height:18px;color:#fff;font-weight:400;will-change:transform;">−41.02%</div>
<div class="a" style="left:17px;top:873.5px;width:1781px;height:40px;background:#1f1f1f"></div>
<div class="t" style="left:33px;top:884.00px;font-size:14px;line-height:20px;color:#dbdbdb;font-weight:700;">Returns</div>
<div class="t" style="left:33px;top:924.00px;font-size:14px;line-height:20px;color:#8c8c8c;font-weight:400;">Metric</div>
<div class="t" style="right:1097.5px;top:924.00px;font-size:14px;line-height:20px;color:#8c8c8c;font-weight:400;">All</div>
<div class="t" style="right:741px;top:924.00px;font-size:14px;line-height:20px;color:#8c8c8c;font-weight:400;">Long</div>
<div class="t" style="right:385px;top:924.00px;font-size:14px;line-height:20px;color:#8c8c8c;font-weight:400;">Short</div>
<div class="a" style="left:17px;top:955px;width:1781px;height:1px;background:#4a4a4a"></div>
<div class="t" style="left:33px;top:974.00px;font-size:14px;line-height:20px;color:#dbdbdb;font-weight:400;">Initial capital</div>
<div class="t" style="right:1097.4px;top:971.80px;font-size:14px;line-height:20px;color:#dbdbdb;font-weight:400;">400.00<span class="u2">USD</span></div>
<div class="a" style="left:17px;top:1012px;width:1781px;height:1px;background:#3a3a3a"></div>
<div class="t" style="left:33px;top:1030.70px;font-size:14px;line-height:20px;color:#dbdbdb;font-weight:400;">Open P&amp;L</div>
<div class="t" style="right:1097.4px;top:1020.20px;font-size:14px;line-height:20px;color:#dbdbdb;font-weight:400;">0<span class="u2">USD</span></div>
</body></html>
